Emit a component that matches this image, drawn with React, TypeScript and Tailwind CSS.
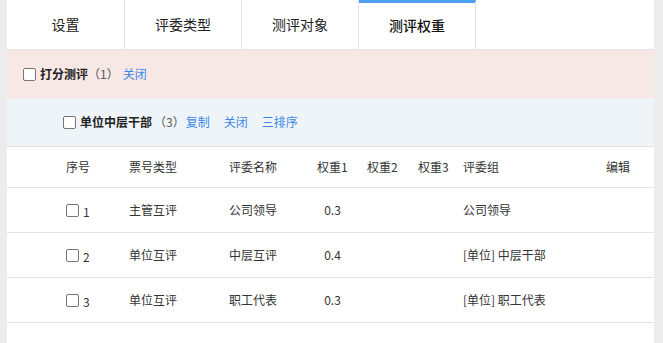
import React from "react";

const font = { fontFamily: '"Noto Sans CJK SC", "Noto Sans", sans-serif' };

type Row = { no: number; type: string; name: string; w1: string; group: string };

const rows: Row[] = [
  { no: 1, type: "主管互评", name: "公司领导", w1: "0.3", group: "公司领导" },
  { no: 2, type: "单位互评", name: "中层互评", w1: "0.4", group: "[单位] 中层干部" },
  { no: 3, type: "单位互评", name: "职工代表", w1: "0.3", group: "[单位] 职工代表" },
];

const tabs = ["设置", "评委类型", "测评对象", "测评权重"];

function Box() {
  return <span className="inline-block h-[13px] w-[13px] shrink-0 rounded-[2px] border border-[#767676] bg-white" />;
}

export default function App() {
  return (
    <div className="h-[343px] w-[663px] overflow-hidden bg-[#ececec] pl-[7px] pr-[9px]" style={font}>
      <div className="h-full bg-white">
        {/* tabs */}
        <div className="flex h-[50px] border-b border-[#e3e3e3]">
          {tabs.map((t, i) => {
            const active = i === 3;
            return (
              <div
                key={t}
                className={`flex ${i === 0 ? "w-[118px]" : "w-[117px]"} items-center justify-center border-r border-[#e3e3e3] text-[14px] ${
                  active ? "border-t-[3px] border-t-[#4c9ff3] pb-[2px] font-medium text-[#111]" : "text-[#222]"
                }`}
              >
                {t}
              </div>
            );
          })}
        </div>

        {/* 打分测评 */}
        <div className="flex h-[48px] items-center bg-[#f7e8e6] pl-[16px] text-[12px]">
          <Box />
          <span className="ml-[4px] font-bold text-[#222]">打分测评</span>
          <span className="text-[#555]">（1）</span>
          <span className="ml-[4px] text-[#3a87e8]">关闭</span>
        </div>

        {/* 单位中层干部 */}
        <div className="flex h-[49px] items-center border-b border-[#e3e3e3] bg-[#eff4f8] pl-[56px] text-[12px]">
          <Box />
          <span className="ml-[4px] font-bold text-[#222]">单位中层干部</span>
          <span className="ml-[2px] text-[#555]">（3）</span>
          <span className="ml-[1px] text-[#3a87e8]">复制</span>
          <span className="ml-[14px] text-[#3a87e8]">关闭</span>
          <span className="ml-[14px] text-[#3a87e8]">三排序</span>
        </div>

        {/* header */}
        <div className="flex h-[41px] items-center border-b border-[#e3e3e3] pl-[59px] text-[12px] text-[#333]">
          <div className="w-[63px]">序号</div>
          <div className="w-[100px]">票号类型</div>
          <div className="w-[88px]">评委名称</div>
          <div className="w-[50px]">权重1</div>
          <div className="w-[51px]">权重2</div>
          <div className="w-[45px]">权重3</div>
          <div className="w-[143px]">评委组</div>
          <div>编辑</div>
        </div>

        {rows.map((r) => (
          <div key={r.no} className="flex h-[45px] items-center border-b border-[#e3e3e3] pl-[59px] text-[12px] text-[#333]">
            <div className="flex w-[63px] items-center gap-[4px]">
              <Box />
              <span className="mt-[3px]">{r.no}</span>
            </div>
            <div className="w-[100px]">{r.type}</div>
            <div className="w-[88px]">{r.name}</div>
            <div className="w-[50px]">
              <span className="inline-block w-[31px] text-center">{r.w1}</span>
            </div>
            <div className="w-[51px]" />
            <div className="w-[45px]" />
            <div className="w-[143px]">{r.group}</div>
            <div />
          </div>
        ))}
      </div>
    </div>
  );
}
